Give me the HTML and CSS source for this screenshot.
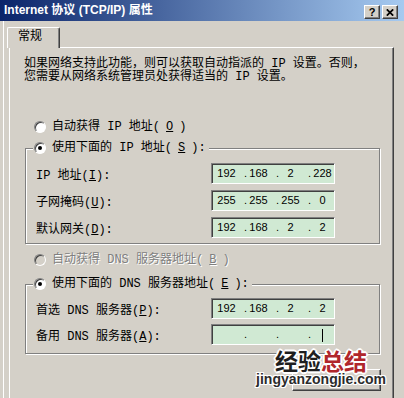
FILE: index.html
```html
<!DOCTYPE html>
<html lang="zh-CN">
<head>
    <meta charset="UTF-8">
    <meta name="viewport" content="width=device-width, initial-scale=1.0">
    <title>Internet 协议 (TCP/IP) 属性</title>
    <link rel="stylesheet" href="styles.css">
</head>
<body>

    <div class="window">
        <div class="titlebar">
            <span class="title">Internet 协议 (TCP/IP) 属性</span>
            <div class="caption-btns">
                <span class="cbtn">?</span>
                <span class="cbtn">
                    <svg width="8" height="7" viewBox="0 0 8 7"><path d="M0.8 0.3 L7.2 6.7 M7.2 0.3 L0.8 6.7" stroke="#000" stroke-width="1.7"/></svg>
                </span>
            </div>
        </div>

        <div class="client">
            <div class="tabs">
                <div class="tab">常规</div>
            </div>

            <div class="panel">
                <p class="intro">如果网络支持此功能，则可以获取自动指派的 IP 设置。否则，<br>您需要从网络系统管理员处获得适当的 IP 设置。</p>

                <div class="option first"><span class="radio"></span>自动获得 IP 地址(<u>O</u>)</div>

                <div class="group ip-group">
                    <div class="option legend"><span class="radio on"></span>使用下面的 IP 地址(<u>S</u>):</div>
                    <div class="fields">
                        <div class="field">
                            <span class="field-label">IP 地址(<u>I</u>):</span>
                            <div class="ipbox"><span class="seg">192</span><span class="dot">.</span><span class="seg">168</span><span class="dot">.</span><span class="seg">2</span><span class="dot">.</span><span class="seg">228</span></div>
                        </div>
                        <div class="field">
                            <span class="field-label">子网掩码(<u>U</u>):</span>
                            <div class="ipbox"><span class="seg">255</span><span class="dot">.</span><span class="seg">255</span><span class="dot">.</span><span class="seg">255</span><span class="dot">.</span><span class="seg">0</span></div>
                        </div>
                        <div class="field">
                            <span class="field-label">默认网关(<u>D</u>):</span>
                            <div class="ipbox"><span class="seg">192</span><span class="dot">.</span><span class="seg">168</span><span class="dot">.</span><span class="seg">2</span><span class="dot">.</span><span class="seg">2</span></div>
                        </div>
                    </div>
                </div>

                <div class="option disabled"><span class="radio"></span>自动获得 DNS 服务器地址(<u>B</u>)</div>

                <div class="group dns-group">
                    <div class="option legend"><span class="radio on"></span>使用下面的 DNS 服务器地址(<u>E</u>):</div>
                    <div class="fields">
                        <div class="field">
                            <span class="field-label">首选 DNS 服务器(<u>P</u>):</span>
                            <div class="ipbox"><span class="seg">192</span><span class="dot">.</span><span class="seg">168</span><span class="dot">.</span><span class="seg">2</span><span class="dot">.</span><span class="seg">2</span></div>
                        </div>
                        <div class="field">
                            <span class="field-label">备用 DNS 服务器(<u>A</u>):</span>
                            <div class="ipbox"><span class="seg"></span><span class="dot">.</span><span class="seg"></span><span class="dot">.</span><span class="seg"></span><span class="dot">.</span><span class="seg"><span class="caret"></span></span></div>
                        </div>
                    </div>
                </div>

                <div class="actions"><span class="button"></span></div>
            </div>
        </div>
    </div>

    <div class="watermark">
        <span class="wm-title">经验<span class="wm-red">总结</span></span>
        <span class="wm-url">jingyanzongjie.com</span>
    </div>

</body>
</html>
```

FILE: styles.css
```css
body {
    margin: 0;
    width: 404px;
    height: 398px;
    overflow: hidden;
    background-color: #d4d0c8;
    font-family: "Liberation Mono", "Noto Sans CJK SC", monospace;
    font-size: 12px;
    color: #000;
}
.titlebar {
    height: 21px;
    display: flex;
    justify-content: space-between;
    background: linear-gradient(to right, #0a246a, #a6caf0);
    color: #fff;
}
.title {
    font: bold 12px/21px "Liberation Sans", "Noto Sans CJK SC", sans-serif;
    padding-left: 4px;
}
.caption-btns {
    display: flex;
    gap: 2px;
    margin: 5px 6px 0 0;
}
.cbtn {
    width: 16px;
    height: 14px;
    box-sizing: border-box;
    background-color: #d4d0c8;
    border: 1px solid;
    border-color: #fff #404040 #404040 #fff;
    box-shadow: inset -1px -1px 0 #808080;
    display: flex;
    align-items: center;
    justify-content: center;
    color: #000;
    font: bold 11px/1 "Liberation Sans", sans-serif;
}
.client {
    margin-left: 3px;
    border-left: 1px solid #fff;
    height: 377px;
}
.tabs {
    display: flex;
    padding: 6px 0 0 3px;
}
.tab {
    position: relative;
    z-index: 1;
    width: 53px;
    height: 21px;
    box-sizing: border-box;
    margin-bottom: -1px;
    background-color: #d4d0c8;
    border-top: 1px solid #fff;
    border-left: 1px solid #fff;
    border-right: 1px solid #404040;
    box-shadow: inset -1px 0 0 #808080;
    border-radius: 2px 2px 0 0;
    padding-left: 10px;
    line-height: 18px;
}
.panel {
    margin-left: 5px;
    width: 385px;
    height: 360px;
    box-sizing: border-box;
    border-top: 1px solid #fff;
    border-left: 1px solid #fff;
    border-right: 1px solid #404040;
    box-shadow: inset -1px 0 0 #808080;
}
.intro {
    margin: 0;
    padding: 10px 0 0 14px;
    line-height: 13px;
    white-space: nowrap;
}
.option {
    display: flex;
    align-items: center;
    gap: 6px;
    height: 16px;
    line-height: 16px;
    margin-left: 24px;
    white-space: nowrap;
}
.option.first {
    margin-top: 35px;
}
.option.disabled {
    margin-top: 8px;
    color: #808080;
    text-shadow: 1px 1px 0 #fff;
}
.radio {
    width: 12px;
    height: 12px;
    flex: none;
    box-sizing: border-box;
    border-radius: 50%;
    background-color: #fff;
    border: 1px solid;
    border-color: #808080 #fff #fff #808080;
    box-shadow: inset 1px 1px 0 #404040;
    display: flex;
    align-items: center;
    justify-content: center;
}
.radio.on::after {
    content: "";
    width: 4px;
    height: 4px;
    border-radius: 50%;
    background-color: #000;
}
.disabled .radio {
    background-color: #d4d0c8;
}
.group {
    margin-left: 15px;
    width: 355px;
    box-sizing: border-box;
    border: 1px solid #808080;
    box-shadow: inset 1px 1px 0 #fff, 1px 1px 0 #fff;
    padding: 0 0 5px 10px;
}
.group .legend {
    margin: -9px 0 0 -3px;
    padding: 0 3px 0 1px;
    width: fit-content;
    background-color: #d4d0c8;
}
.ip-group {
    margin-top: 13px;
}
.dns-group {
    margin-top: 16px;
    padding-bottom: 8px;
}
.fields {
    display: flex;
    flex-direction: column;
    gap: 6px;
    margin-top: 7px;
}
.dns-group .fields {
    gap: 5px;
    margin-top: 6px;
}
.field {
    display: flex;
    align-items: center;
    height: 21px;
}
.field-label {
    width: 175px;
    white-space: nowrap;
}
.ipbox {
    width: 124px;
    height: 21px;
    box-sizing: border-box;
    background-color: #d0e9d3;
    border: 1px solid;
    border-color: #808080 #fff #fff #808080;
    box-shadow: inset 1px 1px 0 #404040;
    display: flex;
    padding-left: 3px;
    font: 11px/19px "Liberation Sans", sans-serif;
}
.seg {
    width: 23px;
    text-align: center;
}
.dot {
    width: 9px;
    text-align: right;
}
.caret {
    display: inline-block;
    width: 1px;
    height: 13px;
    background-color: #000;
    vertical-align: middle;
}
.actions {
    display: flex;
    justify-content: flex-end;
    margin: 15px 0 0 15px;
    width: 356px;
}
.button {
    width: 89px;
    height: 22px;
    box-sizing: border-box;
    border: 1px solid;
    border-color: #fff #404040 #404040 #fff;
    box-shadow: inset -1px -1px 0 #808080;
}
.watermark {
    position: absolute;
    left: 254px;
    top: 348px;
    width: 134px;
    display: flex;
    flex-direction: column;
    align-items: center;
}
.wm-title {
    font: bold 23px/24px "Noto Sans CJK SC", sans-serif;
    color: #1e1e1e;
    text-shadow: -2px 0 #fff, 2px 0 #fff, 0 -2px #fff, 0 2px #fff,
        -1px -1px #fff, 1px 1px #fff, -1px 1px #fff, 1px -1px #fff;
}
.wm-red {
    color: #b0262b;
}
.wm-url {
    font: bold 14px/14px "Liberation Sans", sans-serif;
    color: #2b2b2b;
    text-shadow: -1px 0 #fff, 1px 0 #fff, 0 -1px #fff, 0 1px #fff,
        -1px -1px #fff, 1px 1px #fff, -1px 1px #fff, 1px -1px #fff;
}
```
